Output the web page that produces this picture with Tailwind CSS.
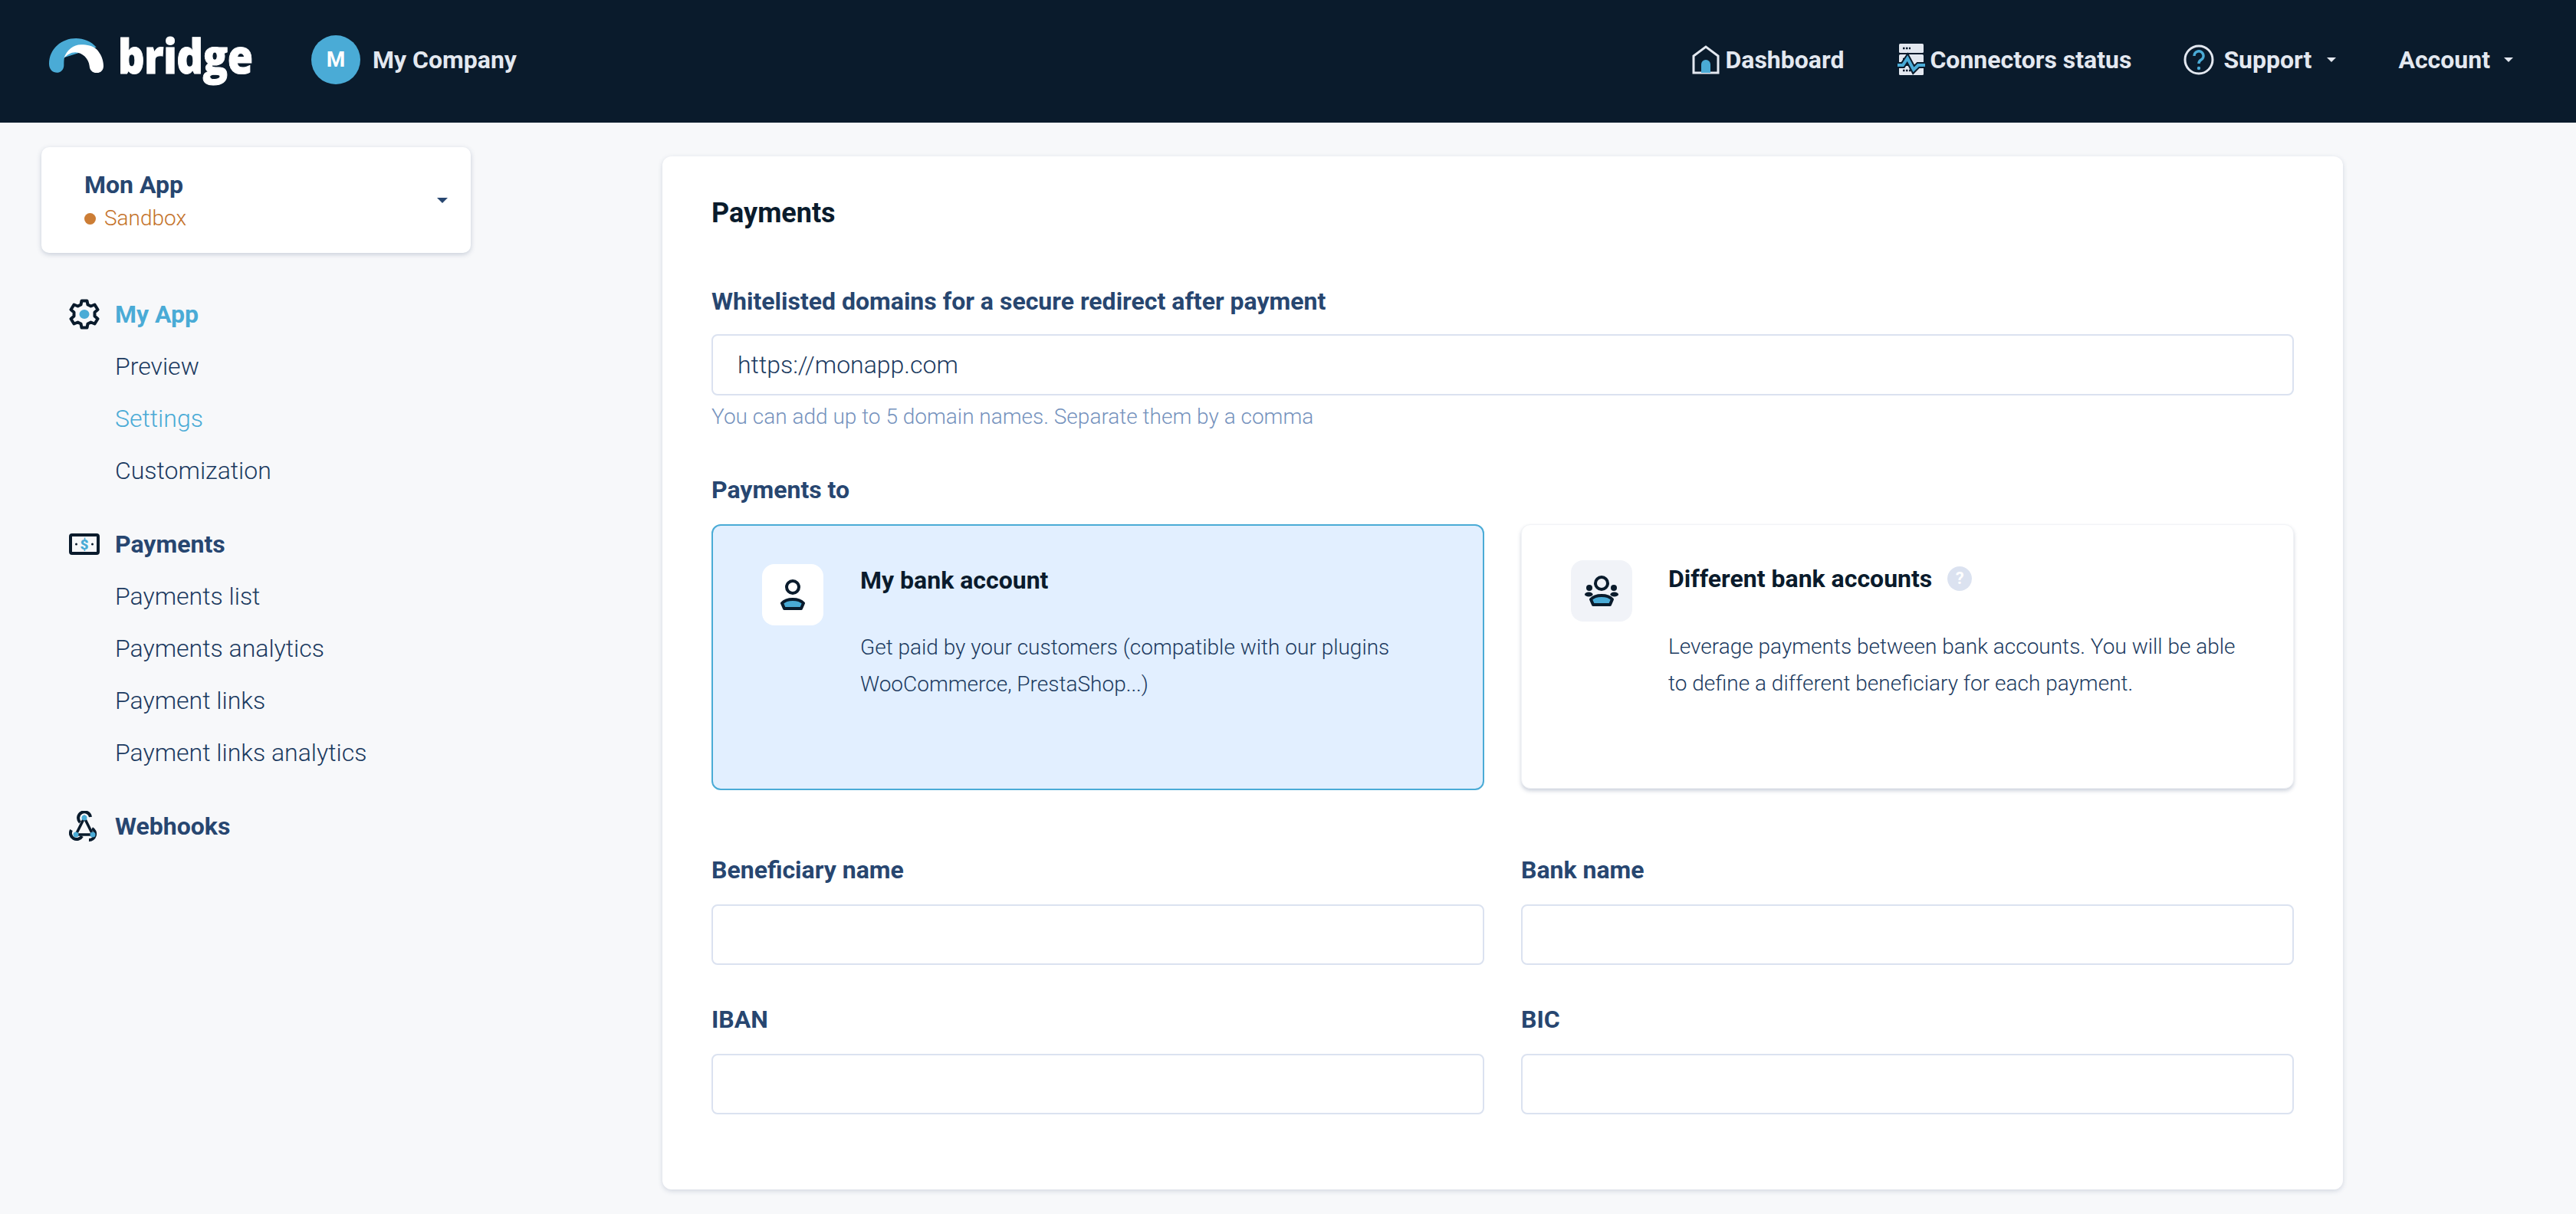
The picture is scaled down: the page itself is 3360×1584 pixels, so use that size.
<!DOCTYPE html>
<html lang="en">
<head>
<meta charset="utf-8">
<title>Bridge - Payments settings</title>
<script src="https://cdn.jsdelivr.net/npm/@tailwindcss/browser@4"></script>
</head>
<body class="w-[3360px] h-[1584px] overflow-hidden bg-[#f7f8fa] font-['Roboto',sans-serif] text-[#274670]">
<header class="h-[160px] bg-[#0a1b2c] flex items-center pl-[64px] pr-[82px] pb-[4px]">
  <div class="flex items-center w-[342px] shrink-0">
    <svg class="w-[71px] h-[45px] -mt-[11px]" viewBox="0 0 213 135"><path d="M0 100C0 40 50 0 105 0C135 0 165 12 185 35L60 75C58 85 58 95 58 105C58 145 0 145 0 100Z" fill="#4aabd6"/><path d="M58 78C70 45 95 25 125 25C150 25 170 30 185 42C203 60 213 85 213 108C213 145 160 145 158 108C155 80 130 55 103 55C85 55 70 65 58 78Z" fill="#fff"/></svg>
    <span class="ml-[19px] origin-left scale-x-[0.87] font-['Open_Sans',sans-serif] font-extrabold text-[62px] leading-none tracking-[-0.5px] text-white [-webkit-text-stroke:1px_white] -mt-[12px]">bridge</span>
  </div>
  <div class="w-[64px] h-[64px] rounded-full bg-[#4aabd6] flex items-center justify-center text-white font-bold text-[28px]">M</div>
  <span class="ml-[16px] text-[32px] font-bold text-[#e3e8f0]">My Company</span>
  <nav class="ml-auto flex items-center text-[32px] font-bold text-[#e3e8f0]">
    <svg class="w-[36px] h-[38px]" viewBox="0 0 36 38"><path d="M2 36V14L18 2L34 14V36Z" fill="none" stroke="#e3e8f0" stroke-width="3"/><path d="M12 36V25a6 6 0 0 1 12 0V36Z" fill="#4aabd6"/></svg>
    <span class="ml-[7px]">Dashboard</span>
    <svg class="ml-[70px] w-[36px] h-[42px]" viewBox="0 0 36 42"><rect x="2" y="0" width="32" height="12" rx="1.500" fill="#e3e8f0"/><rect x="2" y="14" width="32" height="13" rx="1.500" fill="#e3e8f0"/><rect x="2" y="29" width="32" height="12" rx="1.500" fill="#e3e8f0"/><path d="M7 6h10M7 20h10M7 35h10" stroke="#0a1b2c" stroke-width="2.500" stroke-dasharray="2.500 1.500"/><path d="M0 28H7L13 19L21 34L27 28H36" fill="none" stroke="#0a1b2c" stroke-width="8"/><path d="M0 28H7L13 19L21 34L27 28H36" fill="none" stroke="#4aabd6" stroke-width="4"/></svg>
    <span class="ml-[6px]">Connectors status</span>
    <svg class="ml-[68px] w-[40px] h-[40px]" viewBox="0 0 40 40"><circle cx="20" cy="20" r="18" fill="none" stroke="#e3e8f0" stroke-width="3"/><path d="M14 15a6 6 0 1 1 9 5c-2 1.300-3 2.500-3 5" fill="none" stroke="#4aabd6" stroke-width="3.500"/><circle cx="20" cy="31" r="2.200" fill="#4aabd6"/></svg>
    <span class="ml-[12px]">Support</span>
    <span class="ml-[20px] w-0 h-0 border-x-[6px] border-x-transparent border-t-[6px] border-t-[#e3e8f0]"></span>
    <span class="ml-[81px]">Account</span>
    <span class="ml-[18px] w-0 h-0 border-x-[6px] border-x-transparent border-t-[6px] border-t-[#e3e8f0]"></span>
  </nav>
</header>
<div class="flex items-start">
  <aside class="w-[864px] shrink-0 pl-[54px] pt-[32px]">
    <div class="w-[560px] h-[138px] bg-white rounded-[10px] shadow-[0_2px_6px_rgba(60,80,120,0.25)] flex items-center pl-[56px] pr-[30px]">
      <div>
        <div class="text-[32px] leading-[40px] font-bold">Mon App</div>
        <div class="flex items-center mt-[8px] text-[28px] leading-[32px] font-light text-[#c4722a]"><span class="w-[15px] h-[15px] rounded-full bg-[#cc7d35] mr-[11px]"></span>Sandbox</div>
      </div>
      <span class="ml-auto w-0 h-0 border-x-[7px] border-x-transparent border-t-[7px] border-t-[#274670]"></span>
    </div>
    <nav class="mt-[46px] pl-[36px] text-[32px] w-[520px] font-light text-[#1b3a60]">
      <div class="flex items-center h-[68px]">
        <svg class="w-[40px] h-[40px] mr-[20px]" viewBox="0 0 40 40"><path d="M16.500 2.500h7l1 5 4 2 5-2 4 6.500-4 3.500v5l4 3.500-4 6.500-5-2-4 2-1 5h-7l-1-5-4-2-5 2-4-6.500 4-3.500v-5l-4-3.500 4-6.500 5 2 4-2Z" fill="none" stroke="#0a1b2c" stroke-width="4" stroke-linejoin="round"/><ellipse cx="20" cy="20" rx="6.500" ry="6" fill="#4aabd6"/></svg>
        <span class="font-bold text-[#4aabd6]">My App</span>
      </div>
      <a class="block h-[68px] leading-[68px] pl-[60px]">Preview</a>
      <a class="block h-[68px] leading-[68px] pl-[60px] text-[#4aabd6]">Settings</a>
      <a class="block h-[68px] leading-[68px] pl-[60px]">Customization</a>
      <div class="flex items-center h-[68px] mt-[28px]">
        <svg class="w-[40px] h-[28px] mr-[20px]" viewBox="0 0 40 28"><rect x="2" y="2" width="36" height="24" rx="2" fill="none" stroke="#0a1b2c" stroke-width="4"/><text x="20" y="21" text-anchor="middle" font-family="Roboto" font-weight="900" font-size="19" fill="#4aabd6">$</text><circle cx="9.500" cy="14" r="1.500" fill="#0a1b2c"/><circle cx="30.500" cy="14" r="1.500" fill="#0a1b2c"/></svg>
        <span class="font-bold text-[#274670]">Payments</span>
      </div>
      <a class="block h-[68px] leading-[68px] pl-[60px]">Payments list</a>
      <a class="block h-[68px] leading-[68px] pl-[60px]">Payments analytics</a>
      <a class="block h-[68px] leading-[68px] pl-[60px]">Payment links</a>
      <a class="block h-[68px] leading-[68px] pl-[60px]">Payment links analytics</a>
      <div class="flex items-center h-[68px] mt-[28px]">
        <svg class="w-[40px] h-[40px] mr-[20px]" viewBox="0 0 40 40"><path d="M20 9 9 31H31Z" fill="none" stroke="#0a1b2c" stroke-width="3.500"/><path d="M14.500 15A8 8 0 1 1 28 8M3 25A8 8 0 1 0 17 33M30 23A8 8 0 0 1 26 38" fill="none" stroke="#0a1b2c" stroke-width="4"/><circle cx="20" cy="9" r="3.500" fill="#4aabd6"/><circle cx="9" cy="31" r="3.500" fill="#4aabd6"/><circle cx="31" cy="31" r="3.500" fill="#4aabd6"/></svg>
        <span class="font-bold text-[#274670]">Webhooks</span>
      </div>
    </nav>
  </aside>
  <main class="w-[2192px] h-[1348px] mt-[44px] bg-white rounded-[12px] shadow-[0_2px_6px_rgba(60,80,120,0.2)] px-[64px] pt-[52px]">
    <h1 class="text-[36px] leading-[44px] font-bold text-[#0a1b2c]">Payments</h1>
    <label class="block mt-[73px] text-[32px] leading-[40px] font-bold">Whitelisted domains for a secure redirect after payment</label>
    <div class="mt-[23px] h-[80px] border-2 border-[#dbe2f0] rounded-[8px] flex items-center pl-[32px] text-[32px] font-light text-[#1b3a60]">https://monapp.com</div>
    <p class="mt-[10px] text-[28px] leading-[36px] font-light text-[#7592bd]">You can add up to 5 domain names. Separate them by a comma</p>
    <label class="block mt-[57px] text-[32px] leading-[40px] font-bold">Payments to</label>
    <div class="mt-[25px] grid grid-cols-2 gap-[48px]">
      <div class="h-[347px] rounded-[12px] border-2 border-[#4aabd6] bg-[#e2efff] flex pl-[64px] pt-[48px]">
        <div class="w-[80px] h-[80px] rounded-[16px] bg-white flex items-center justify-center shrink-0 mt-[2px]">
          <svg class="w-[32px] h-[40px]" viewBox="0 0 32 40"><circle cx="16" cy="10" r="8" fill="none" stroke="#0a1b2c" stroke-width="4"/><path d="M2 31C8 24.300 24 24.300 30 31L27 38H5Z" fill="#4aabd6" stroke="#0a1b2c" stroke-width="4" stroke-linejoin="round"/></svg>
        </div>
        <div class="ml-[48px] w-[730px]">
          <div class="text-[32px] leading-[40px] font-bold text-[#0a1b2c] mt-[3px]">My bank account</div>
          <p class="mt-[44px] text-[28px] leading-[48px] font-light text-[#1b3a60]">Get paid by your customers (compatible with our plugins WooCommerce, PrestaShop...)</p>
        </div>
      </div>
      <div class="h-[345px] rounded-[12px] bg-white border border-[#f1f3f6] shadow-[0_3px_5px_rgba(60,80,120,0.25)] flex pl-[64px] pt-[46px]">
        <div class="w-[80px] h-[80px] rounded-[16px] bg-[#f1f3f8] flex items-center justify-center shrink-0">
          <svg class="w-[44px] h-[40px]" viewBox="0 0 44 40"><circle cx="22" cy="10" r="8" fill="none" stroke="#0a1b2c" stroke-width="4"/><circle cx="6" cy="16" r="4" fill="#0a1b2c"/><circle cx="38" cy="16" r="4" fill="#0a1b2c"/><ellipse cx="5.300" cy="24.500" rx="5.300" ry="3" fill="#0a1b2c"/><ellipse cx="38.700" cy="24.500" rx="5.300" ry="3" fill="#0a1b2c"/><path d="M8 31C14 24.300 30 24.300 36 31L33 38H11Z" fill="#4aabd6" stroke="#0a1b2c" stroke-width="4" stroke-linejoin="round"/></svg>
        </div>
        <div class="ml-[47px] w-[760px]">
          <div class="flex items-center text-[32px] leading-[40px] font-bold text-[#0a1b2c] mt-[4px]">Different bank accounts<span class="ml-[20px] w-[32px] h-[32px] rounded-full bg-[#dbe2f0] text-white text-[22px] flex items-center justify-center">?</span></div>
          <p class="mt-[45px] text-[28px] leading-[48px] font-light text-[#1b3a60]">Leverage payments between bank accounts. You will be able to define a different beneficiary for each payment.</p>
        </div>
      </div>
    </div>
    <div class="mt-[84px] grid grid-cols-2 gap-x-[48px] gap-y-[51px]">
      <div>
        <label class="block text-[32px] leading-[40px] font-bold">Beneficiary name</label>
        <div class="mt-[25px] h-[79px] border-2 border-[#dbe2f0] rounded-[8px]"></div>
      </div>
      <div>
        <label class="block text-[32px] leading-[40px] font-bold">Bank name</label>
        <div class="mt-[25px] h-[79px] border-2 border-[#dbe2f0] rounded-[8px]"></div>
      </div>
      <div>
        <label class="block text-[32px] leading-[40px] font-bold">IBAN</label>
        <div class="mt-[25px] h-[79px] border-2 border-[#dbe2f0] rounded-[8px]"></div>
      </div>
      <div>
        <label class="block text-[32px] leading-[40px] font-bold">BIC</label>
        <div class="mt-[25px] h-[79px] border-2 border-[#dbe2f0] rounded-[8px]"></div>
      </div>
    </div>
  </main>
</div>
</body>
</html>
